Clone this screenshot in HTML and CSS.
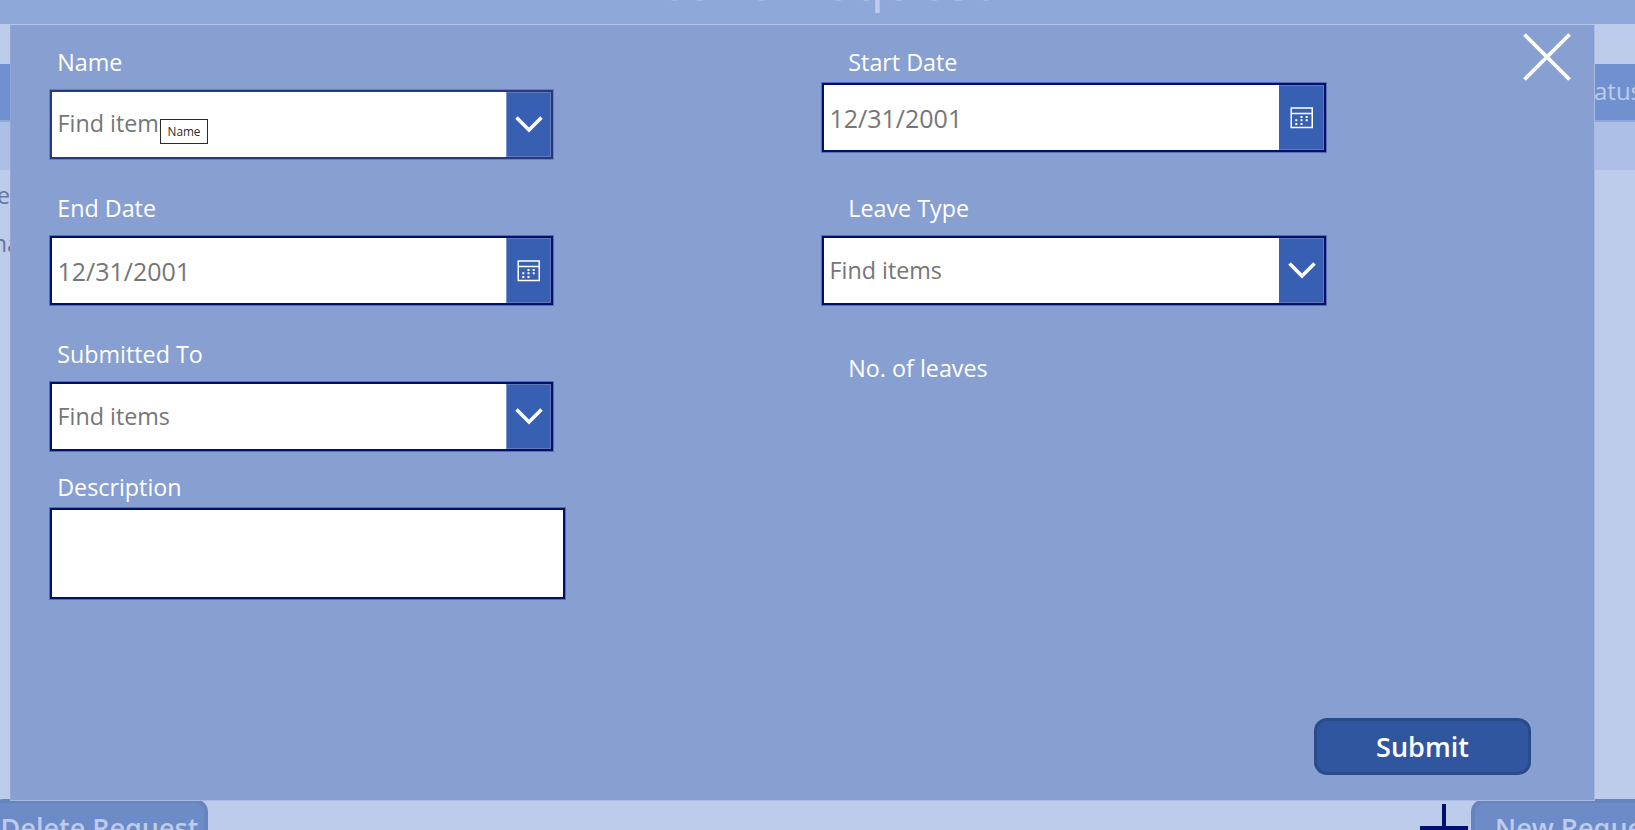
FILE: index.html
```html
<!DOCTYPE html>
<html lang="en">
<head>
<meta charset="utf-8">
<title>Leave Request</title>
<link rel="stylesheet" href="styles.css">
</head>
<body>
<div class="app">
  <header class="app-header"><h1>Leave Request</h1></header>
  <main class="table">
    <div class="table-head"><span>atus</span></div>
    <div class="table-row selected"></div>
    <div class="table-row"><span>e</span></div>
    <div class="table-row wide"><span>na</span></div>
  </main>
  <footer class="app-footer">
    <button class="action delete">Delete Request</button>
    <svg class="plus" width="48" height="48" viewBox="0 0 48 48"><path d="M24 0v48M0 24h48" stroke="#00106e" stroke-width="4"/></svg>
    <button class="action new">New Request</button>
  </footer>
</div>

<section class="modal">
  <div class="column">
    <div class="field">
      <label>Name</label>
      <div class="box soft"><span class="value">Find items</span><span class="trigger"><svg width="28" height="18" viewBox="0 0 28 18"><path d="M1.5 2.5 14 15 26.5 2.5" fill="none" stroke="#fff" stroke-width="3.5"/></svg></span>
        <span class="tooltip">Name</span></div>
    </div>
    <div class="field">
      <label>End Date</label>
      <div class="box"><span class="value date">12/31/2001</span><span class="trigger calendar"><svg width="24" height="22" viewBox="0 0 24 22"><path d="M1.25 1h21v19.5h-21zM1.25 6.5h21" fill="none" stroke="#fff" stroke-width="1.5"/><path d="M10.5 9h2v2h-2zM15.7 9h2v2h-2zM5.3 12.3h2v2h-2zM10.5 12.3h2v2h-2zM15.7 12.3h2v2h-2zM5.3 16h2v2h-2zM10.5 16h2v2h-2z" fill="#fff"/></svg></span></div>
    </div>
    <div class="field">
      <label>Submitted To</label>
      <div class="box"><span class="value">Find items</span><span class="trigger"><svg width="28" height="18" viewBox="0 0 28 18"><path d="M1.5 2.5 14 15 26.5 2.5" fill="none" stroke="#fff" stroke-width="3.5"/></svg></span></div>
    </div>
    <div class="field description">
      <label>Description</label>
      <div class="box area"></div>
    </div>
  </div>
  <div class="column right">
    <div class="field start">
      <label>Start Date</label>
      <div class="box"><span class="value date">12/31/2001</span><span class="trigger calendar"><svg width="24" height="22" viewBox="0 0 24 22"><path d="M1.25 1h21v19.5h-21zM1.25 6.5h21" fill="none" stroke="#fff" stroke-width="1.5"/><path d="M10.5 9h2v2h-2zM15.7 9h2v2h-2zM5.3 12.3h2v2h-2zM10.5 12.3h2v2h-2zM15.7 12.3h2v2h-2zM5.3 16h2v2h-2zM10.5 16h2v2h-2z" fill="#fff"/></svg></span></div>
    </div>
    <div class="field">
      <label>Leave Type</label>
      <div class="box"><span class="value">Find items</span><span class="trigger"><svg width="28" height="18" viewBox="0 0 28 18"><path d="M1.5 2.5 14 15 26.5 2.5" fill="none" stroke="#fff" stroke-width="3.5"/></svg></span></div>
    </div>
    <div class="field count"><label>No. of leaves</label></div>
  </div>
  <div class="side">
    <svg class="close" width="48" height="48" viewBox="0 0 48 48"><path d="M1.5 1.5 46.5 46.5M46.5 1.5 1.5 46.5" stroke="#fff" stroke-width="3.8"/></svg>
    <button class="submit">Submit</button>
  </div>
</section>
</body>
</html>
```

FILE: styles.css
```css
* { box-sizing: border-box; }

body {
  margin: 0;
  height: 830px;
  overflow: hidden;
  position: relative;
  font-family: "Open Sans", sans-serif;
  font-size: 23.3px;
  line-height: 33px;
  background: #becceb;
}

button { font-family: inherit; padding: 0; margin: 0; }

.app { height: 830px; overflow: hidden; display: flex; flex-direction: column; }

.app-header {
  height: 24px;
  flex: none;
  overflow: hidden;
  background: #8ea8da;
  display: flex;
  justify-content: center;
  align-items: flex-end;
}
.app-header h1 {
  margin: 0 14px 0 0;
  font-size: 54px;
  font-weight: 500;
  letter-spacing: -0.2px;
  line-height: 74px;
  height: 82px;
  flex: none;
  color: #becceb;
}

.table { flex: none; height: 775px; padding-top: 40px; }
.table-head {
  height: 58px;
  background: #7090cf;
  border-bottom: 2px solid #8ea8da;
  color: #becceb;
  padding: 10px 0 0 1594px;
  font-size: 24px;
}
.table-row { height: 48px; width: 10px; padding-top: 2px; display: flex; justify-content: flex-end; align-items: center; color: #6a769f; }
.table-row.selected { width: auto; background: #adbfe6; }
.table-row.wide { width: 20px; }

.app-footer { flex: none; display: flex; align-items: flex-start; height: 60px; }
.action {
  height: 57px;
  border: 4px solid #6684bd;
  border-radius: 13px;
  background: #6d8bc7;
  color: #becceb;
  font-size: 27px;
  font-weight: 600;
  white-space: nowrap;
}
.delete { width: 217px; margin-left: -9px; flex: none; }
.plus { margin: 5px 3px 0 1212px; flex: none; }
.new { width: 220px; flex: none; }

.modal {
  position: absolute;
  left: 10px;
  top: 24px;
  width: 1585px;
  height: 777px;
  background: #889fd1;
  border: 1px solid #a9bbe2;
  border-top-color: #b5c4e8;
  border-left-color: #90a6d5;
  display: flex;
  color: #fff;
}

.column { flex: none; width: 515px; margin-left: 39px; padding-top: 20px; }
.column.right { width: 504px; margin-left: 257px; }

.field { margin-bottom: 32px; width: 503px; }
.right .field { width: 504px; }
.field label { display: block; height: 45px; padding: 1px 0 0 7.2px; }
.right .field label { padding-left: 26.3px; }
.field:nth-child(3) { margin-bottom: 19px; }
.description { width: 515px; }
.description label, .start label { height: 38px; }
.right .start { margin-bottom: 39px; }
.right .count { margin-top: 46px; }

.box {
  position: relative;
  height: 69px;
  border: 2px solid #00106e;
  box-shadow: 0 0 0 1px #5a6db0;
  background: #fff;
  color: #767676;
  display: flex;
  align-items: center;
}
.box.soft { border-color: #283883; box-shadow: 0 0 0 1px #6c7fbc; }
.box.area { height: 91px; }

.value { flex: 1; padding: 0 0 1px 5.5px; }
.soft .value { padding-bottom: 3px; }
.value.date { font-size: 25px; padding-top: 1px; padding-bottom: 0; }

.trigger {
  width: 45px;
  height: 65px;
  padding-bottom: 1px;
  background: #3860b2;
  border: 1px solid #6079b9;
  border-left-color: #7d97cf;
  display: flex;
  align-items: center;
  justify-content: center;
}
.trigger.calendar { padding-bottom: 0; padding-left: 1px; }
.right .trigger { border-left-color: #3860b2; }
.trigger svg { display: block; }

.tooltip {
  position: absolute;
  left: 108px;
  top: 27px;
  width: 48px;
  height: 25px;
  border: 1px solid #2b2b2b;
  background: #fff;
  color: #2b2b2b;
  font-size: 11.8px;
  line-height: 23px;
  text-align: center;
}

.side {
  flex: none;
  width: 268px;
  display: flex;
  flex-direction: column;
  justify-content: space-between;
  align-items: flex-end;
  padding: 8px 23px 25px 0;
}
.submit {
  width: 217px;
  height: 57px;
  margin-right: 40px;
  border: 3px solid #2a4a88;
  border-radius: 13px;
  background: #3156a0;
  color: #fff;
  font-size: 27px;
  font-weight: 600;
  line-height: 37px;
  flex: none;
}
```
